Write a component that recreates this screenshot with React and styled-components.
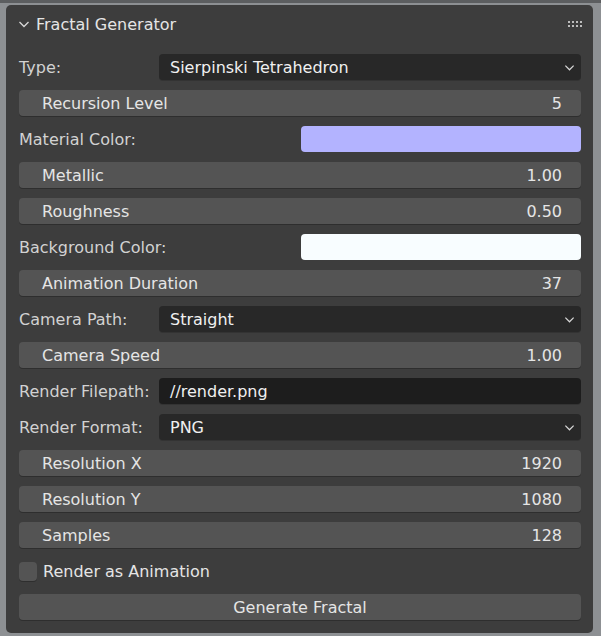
import React from 'react';
import styled, { createGlobalStyle } from 'styled-components';

const Global = createGlobalStyle`
  html, body {
    margin: 0;
    padding: 0;
    background: #8d9093;
  }
  body {
    border-top: 3px solid #5c5e60;
    font-family: "DejaVu Sans", "Liberation Sans", sans-serif;
  }
`;

const Panel = styled.div`
  margin: 2px 0 0 6px;
  width: 587px;
  height: 628px;
  box-sizing: border-box;
  background: #3d3d3d;
  border-radius: 5px;
  color: #e5e5e5;
`;

const Header = styled.div`
  display: flex;
  align-items: center;
  height: 38px;
  padding: 0 10px 0 12px;
  font-size: 16px;
`;

const Title = styled.span`
  flex: 1;
  margin-left: 6px;
`;

const Body = styled.div`
  display: flex;
  flex-direction: column;
  gap: 10px;
  padding: 11px 12px 12px 13px;
`;

const Row = styled.div`
  display: grid;
  grid-template-columns: ${(p) => (p.$wide ? '282px 1fr' : '140px 1fr')};
  align-items: center;
  height: 26px;
`;

const Label = styled.span`
  font-size: 16px;
  color: #d2d2d2;
`;

const Slider = styled.div`
  display: flex;
  justify-content: space-between;
  align-items: center;
  height: 26px;
  padding: 0 19px 0 23px;
  background: #545454;
  border-radius: 4px;
  box-shadow: 0 1px 0 #2e2e2e;
  font-size: 16px;
`;

const Dropdown = styled.div`
  display: flex;
  justify-content: space-between;
  align-items: center;
  height: 26px;
  padding: 0 6px 0 11px;
  background: ${(p) => (p.$text ? '#1d1d1d' : '#282828')};
  border-radius: 4px;
  box-shadow: 0 1px 0 #333;
  font-size: 16px;
  color: #f0f0f0;
`;

const Swatch = styled.div`
  height: 26px;
  border-radius: 4px;
  background: ${(p) => p.$color};
`;

const CheckRow = styled.label`
  display: flex;
  align-items: center;
  gap: 6px;
  height: 26px;
  font-size: 16px;
`;

const Box = styled.span`
  width: 18px;
  height: 19px;
  border-radius: 4px;
  background: #545454;
  box-shadow: 0 1px 0 #2e2e2e;
`;

const Button = styled.div`
  display: flex;
  justify-content: center;
  align-items: center;
  height: 26px;
  background: #545454;
  border-radius: 4px;
  box-shadow: 0 1px 0 #2e2e2e;
  font-size: 16px;
`;

const Chevron = ({ size = 12 }) => (
  <svg width={size} height={size} viewBox="0 0 12 12">
    <path d="M1.5 4 L6 8.5 L10.5 4" fill="none" stroke="#d8d8d8" strokeWidth="1.3" />
  </svg>
);

const Grip = () => (
  <svg width="16" height="8" viewBox="0 0 16 8">
    {[0, 4, 8, 12].map((x) =>
      [0, 4].map((y) => <rect key={x + '-' + y} x={x + 1} y={y + 1} width="2" height="2" fill="#bdbdbd" />)
    )}
  </svg>
);

const SliderField = ({ name, value }) => (
  <Slider>
    <span>{name}</span>
    <span>{value}</span>
  </Slider>
);

const Select = ({ label, value }) => (
  <Row>
    <Label>{label}</Label>
    <Dropdown>
      <span>{value}</span>
      <Chevron size={11} />
    </Dropdown>
  </Row>
);

const ColorField = ({ label, color }) => (
  <Row $wide>
    <Label>{label}</Label>
    <Swatch $color={color} />
  </Row>
);

export default function App() {
  return (
    <>
      <Global />
      <Panel>
        <Header>
          <Chevron />
          <Title>Fractal Generator</Title>
          <Grip />
        </Header>
        <Body>
          <Select label="Type:" value="Sierpinski Tetrahedron" />
          <SliderField name="Recursion Level" value="5" />
          <ColorField label="Material Color:" color="#b3b3ff" />
          <SliderField name="Metallic" value="1.00" />
          <SliderField name="Roughness" value="0.50" />
          <ColorField label="Background Color:" color="#f8fdff" />
          <SliderField name="Animation Duration" value="37" />
          <Select label="Camera Path:" value="Straight" />
          <SliderField name="Camera Speed" value="1.00" />
          <Row>
            <Label>Render Filepath:</Label>
            <Dropdown $text>
              <span>//render.png</span>
            </Dropdown>
          </Row>
          <Select label="Render Format:" value="PNG" />
          <SliderField name="Resolution X" value="1920" />
          <SliderField name="Resolution Y" value="1080" />
          <SliderField name="Samples" value="128" />
          <CheckRow>
            <Box />
            <span>Render as Animation</span>
          </CheckRow>
          <Button>Generate Fractal</Button>
        </Body>
      </Panel>
    </>
  );
}
